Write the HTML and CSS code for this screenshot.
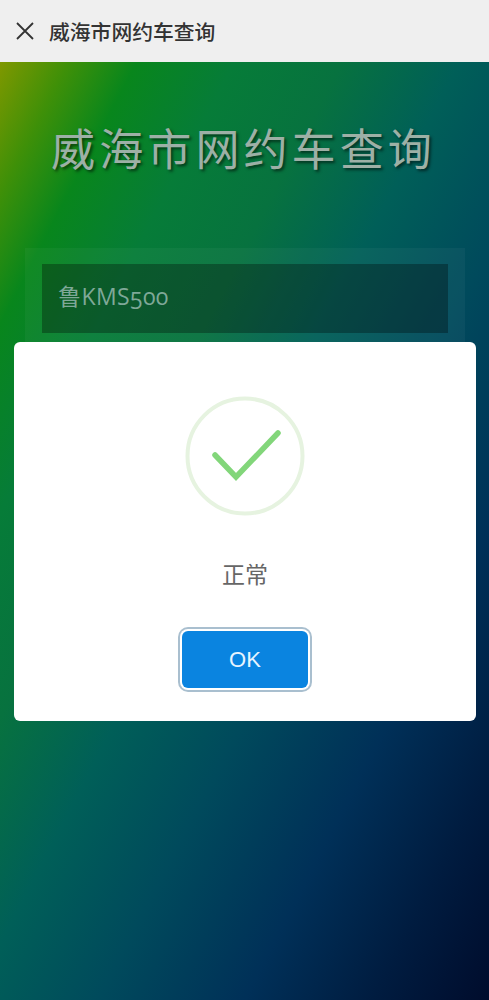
FILE: index.html
```html
<!DOCTYPE html>
<html lang="zh-CN">
<head>
  <meta charset="UTF-8">
  <meta name="viewport" content="width=device-width, initial-scale=1.0">
  <title>威海市网约车查询</title>
  <link rel="stylesheet" href="styles.css">
</head>
<body>
  <div class="topbar">
    <svg class="close-icon" viewBox="0 0 18 18" width="18" height="18">
      <path d="M1 1L17 17M17 1L1 17" stroke="#333" stroke-width="1.8" fill="none"/>
    </svg>
    <span class="topbar-title">威海市网约车查询</span>
  </div>

  <div class="main">
    <h1 class="heading">威海市网约车查询</h1>
    <div class="form-panel">
      <div class="plate-input">鲁KMS500</div>
    </div>
  </div>

  <!-- result dialog -->
  <div class="modal">
    <svg class="check-icon" viewBox="0 0 120 120" width="120" height="120">
      <circle cx="60" cy="60" r="57.5" fill="none" stroke="#e6f3e0" stroke-width="4"/>
      <path d="M30 59L51 81L93 37" fill="none" stroke="#82d67a" stroke-width="5.5" stroke-linecap="round" stroke-linejoin="miter"/>
    </svg>
    <div class="modal-text">正常</div>
    <button class="ok-button">OK</button>
  </div>
</body>
</html>
```

FILE: styles.css
```css
* {
  margin: 0;
  padding: 0;
  box-sizing: border-box;
}
body {
  font-family: "Noto Sans CJK SC", "Liberation Sans", sans-serif;
  width: 489px;
  height: 1000px;
  position: relative;
  overflow: hidden;
}
.topbar {
  height: 62px;
  background-color: #efefef;
  display: flex;
  align-items: center;
  padding-left: 16px;
  gap: 15px;
}
.topbar-title {
  font-size: 20.8px;
  font-weight: 500;
  color: #333;
}
.main {
  height: 938px;
  background: linear-gradient(117.5deg, #7f9800 0%, #3f9008 7%, #08861c 14%, #067c38 24%, #07723f 35%, #005f58 47%, #004a5c 60%, #003058 75%, #001c40 88%, #000c2c 100%);
  padding-top: 55px;
}
.heading {
  font-size: 44px;
  font-weight: 400;
  line-height: 60px;
  letter-spacing: 4.1px;
  text-align: center;
  padding-right: 2px;
  color: #9db0a6;
  text-shadow: 2px 2px 3px rgba(0, 0, 0, 0.55);
}
.form-panel {
  margin: 71px 24px 0 25px;
  padding: 16px 17px;
  height: 200px;
  background-color: rgba(255, 255, 255, 0.04);
}
.plate-input {
  height: 69px;
  padding-left: 16px;
  padding-bottom: 8px;
  display: flex;
  align-items: center;
  font-family: "Open Sans", "Noto Sans CJK SC", sans-serif;
  font-size: 23px;
  letter-spacing: 0.4px;
  font-variant-numeric: oldstyle-nums;
  color: #7fa898;
  background-color: rgba(0, 0, 0, 0.3);
}
.modal {
  position: absolute;
  left: 14px;
  top: 342px;
  width: 462px;
  height: 379px;
  background-color: #fff;
  border-radius: 6px;
  display: flex;
  flex-direction: column;
  align-items: center;
  padding-top: 54px;
}
.modal-text {
  margin-top: 41px;
  font-size: 23px;
  line-height: 32px;
  color: #666;
}
.ok-button {
  margin-top: 42px;
  width: 126px;
  height: 57px;
  border: none;
  border-radius: 6px;
  background-color: #0a84e0;
  color: #e8f4ff;
  font-family: "Liberation Sans", sans-serif;
  font-size: 22px;
  box-shadow: 0 0 0 2px #fff, 0 0 0 4px #a9bfcf;
}
```
